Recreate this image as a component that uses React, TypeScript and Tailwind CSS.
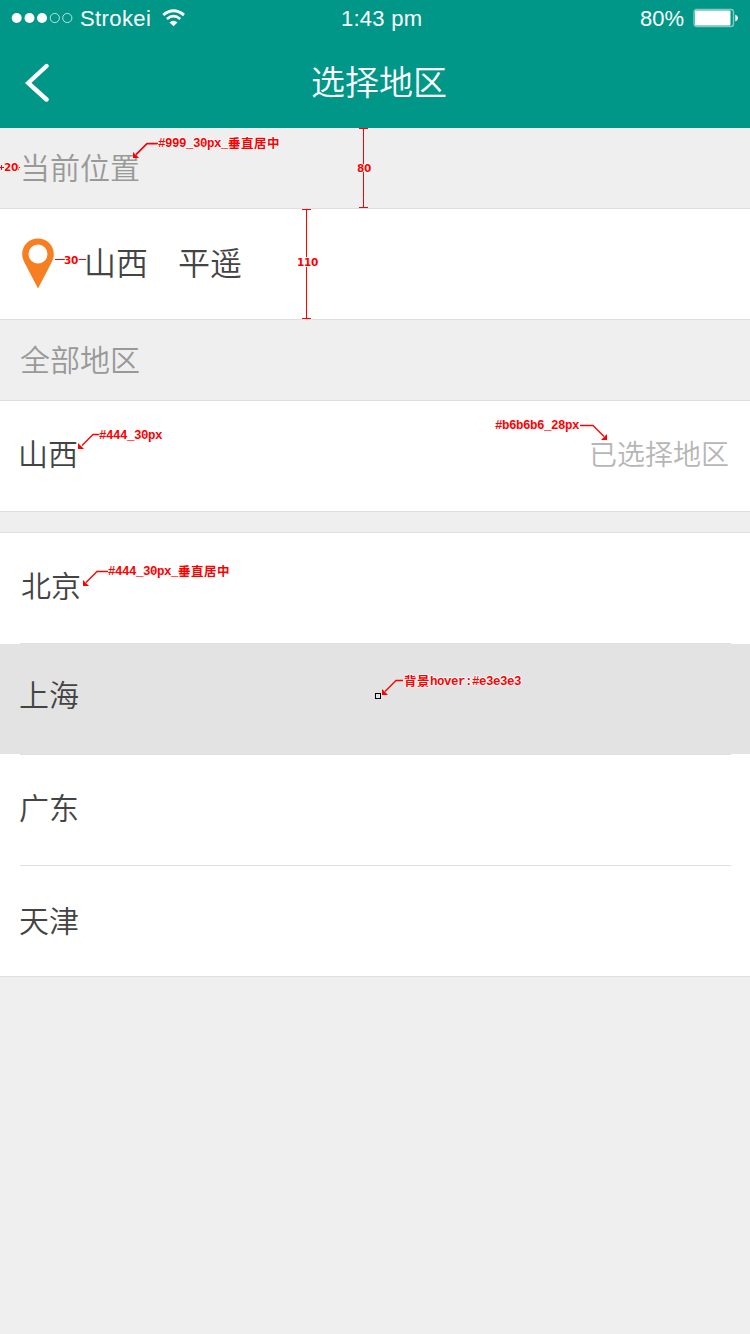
import type { ReactNode } from "react";

const cjk = "font-['Liberation_Sans','Noto_Sans_CJK_SC',sans-serif] font-[350]";

function StatusBar() {
  return (
    <div className="flex h-9 items-center pr-3 pl-[11px] text-[22px] leading-9 text-white">
      <div className="flex w-[330px] items-center">
        <svg width="62" height="12" viewBox="0 0 62 12" fill="#fff">
          <circle cx="5.7" cy="6" r="5" />
          <circle cx="18.5" cy="6" r="5" />
          <circle cx="31" cy="6" r="5" />
          <circle cx="43.8" cy="6" r="4.6" fill="none" stroke="#fff" strokeWidth="0.7" />
          <circle cx="56.3" cy="6" r="4.6" fill="none" stroke="#fff" strokeWidth="0.7" />
        </svg>
        <span className="ml-[7px] w-[71px] pt-px whitespace-nowrap tracking-[0.4px]">Strokei</span>
        <svg className="ml-[11px]" width="24" height="18" viewBox="0 0 24 18" fill="none" stroke="#fff">
          <path d="M1.200 6 Q11.500 -2.400 22 6" strokeWidth="2.900" />
          <path d="M4.900 10 Q11.500 4.300 18.200 10" strokeWidth="2.600" />
          <path d="M7.500 13.400 Q11.500 10 15.500 13.400 L11.500 17.200 Z" fill="#fff" stroke="none" />
        </svg>
      </div>
      <div className="w-[90px] pt-px whitespace-nowrap tracking-[0.25px]">1:43 pm</div>
      <div className="flex flex-1 items-center justify-end">
        <span className="pt-px whitespace-nowrap">80%</span>
        <svg className="ml-[9px]" width="45" height="20" viewBox="0 0 45 20">
          <rect x="1" y="1.500" width="39.500" height="17" rx="2.500" fill="none" stroke="#7fcac2" strokeWidth="1.400" />
          <rect x="2" y="2.500" width="35.500" height="15" rx="1" fill="#fff" />
          <path d="M42.300 6.500 Q45 7.500 45 10 Q45 12.500 42.300 13.500 Z" fill="#fff" />
        </svg>
      </div>
    </div>
  );
}

function SectionTitle({ children }: { children: ReactNode }) {
  return (
    <h2 className="flex h-[81px] items-center border-b border-[#dfdfdf] pt-px pl-5 text-[30px] font-[350] text-[#999]">
      {children}
    </h2>
  );
}

const halo = "[text-shadow:1px_0_#fff,-1px_0_#fff,0_1px_#fff,0_-1px_#fff]";

function Note({ className, children }: { className: string; children: ReactNode }) {
  return (
    <div
      className={
        "absolute flex h-4 items-center font-['Liberation_Mono','Noto_Sans_CJK_SC',monospace] text-[12.5px] leading-4 font-bold tracking-[-0.5px] whitespace-nowrap text-[#f00] " +
        halo +
        " " +
        className
      }
    >
      {children}
    </div>
  );
}

function Measure({ className, children }: { className: string; children: ReactNode }) {
  return (
    <div
      className={
        "absolute h-4 font-['DejaVu_Sans',sans-serif] text-[10.5px] leading-4 font-bold tracking-[-0.3px] whitespace-nowrap text-[#f00] " +
        halo +
        " " +
        className
      }
    >
      {children}
    </div>
  );
}

function Han({ children }: { children: ReactNode }) {
  return <span className="pt-px text-[12.5px] tracking-[0.5px]">{children}</span>;
}

function Annotations() {
  return (
    <div className="pointer-events-none absolute inset-0 overflow-hidden">
      <svg className="absolute inset-0" width="750" height="1334" fill="none" stroke="#f00" strokeWidth="1">
        <g shapeRendering="crispEdges">
          <path d="M359 128.500h9M363.500 128v80M359 207.500h9" />
          <path d="M302 209.500h9M306.500 209v110M302 318.500h9" />
          <path d="M0 167.500h4M1.500 165v5M18 167.500h2M18.500 165v5" />
          <path d="M55 259.500h10M77 259.500h9" />
        </g>
        <path d="M158 143.700h-11l-11 11" strokeWidth="1.700" />
        <path d="M100 434.500h-7l-11 11M580 425.500h13l11 11M108 571.500h-11l-11 11M403 680.500h-7l-11 11" strokeWidth="1.300" />
        <g fill="#f00" stroke="none">
          <path d="M133 152v6h6z" />
          <path d="M78 443v6h6z" />
          <path d="M607 434v6h-6z" />
          <path d="M83 580v6h6z" />
          <path d="M382 689v6h6z" />
        </g>
        <rect x="375.500" y="693.500" width="5" height="5" stroke="#000" fill="#e3e3e3" />
      </svg>
      <Note className="top-[136px] left-[158px]">#999_30px_<Han>垂直居中</Han></Note>
      <Measure className="top-[159px] left-[4px]">20</Measure>
      <Measure className="top-[160px] left-[357px]">80</Measure>
      <Measure className="top-[252px] left-[64px]">30</Measure>
      <Measure className="top-[254px] left-[297px]">110</Measure>
      <Note className="top-[428px] left-[99px]">#444_30px</Note>
      <Note className="top-[418px] left-[495px]">#b6b6b6_28px</Note>
      <Note className="top-[564px] left-[108px]">#444_30px_<Han>垂直居中</Han></Note>
      <Note className="top-[674px] left-[404px]"><Han>背景</Han>hover:#e3e3e3</Note>
    </div>
  );
}

export default function App() {
  return (
    <div className={"relative flex h-[1334px] w-[750px] flex-col overflow-hidden bg-[#efefef] text-[#444] " + cjk}>
      <header className="h-32 bg-[#009788]">
        <StatusBar />
        <div className="grid h-[92px] grid-cols-[100px_1fr_100px] items-center">
          <svg className="mb-[3px] ml-[25px]" width="26" height="40" viewBox="0 0 26 40" fill="none" stroke="#fff" strokeWidth="4.400" strokeLinecap="round">
            <path d="M21.500 4 L3.200 21 L21.500 37.500" />
          </svg>
          <h1 className="pl-2 text-center text-[34px] leading-[94px] font-[350] text-white">选择地区</h1>
        </div>
      </header>

      <SectionTitle>当前位置</SectionTitle>
      <section className="flex h-[111px] items-center border-b border-[#dfdfdf] bg-white pb-px pl-[22px] text-[32px]">
        <svg width="32" height="51" viewBox="0 0 32 51">
          <path
            d="M16 0.500C7.100 0.500 0.200 7.300 0.200 16C0.200 19 1 21.500 2.200 24L16 50.500L29.800 24C31 21.500 31.800 19 31.800 16C31.800 7.300 24.900 0.500 16 0.500ZM16 6.500A9.500 9.500 0 1 1 16 25.500A9.500 9.500 0 1 1 16 6.500Z"
            fill="#f77f21"
            fillRule="evenodd"
          />
        </svg>
        <span className="ml-[30px] pt-px">山西</span>
        <span className="ml-[30px] pt-px">平遥</span>
      </section>

      <SectionTitle>全部地区</SectionTitle>
      <section className="flex h-[111px] items-center justify-between border-b border-[#dfdfdf] bg-white pr-[21px] pl-[18px] pb-1">
        <span className="text-[30px]">山西</span>
        <span className="pt-[3px] text-[28px] text-[#b6b6b6]">已选择地区</span>
      </section>

      <ul className="mt-5 border-y border-[#dfdfdf] bg-white text-[30px]">
        <li className="flex h-[110px] items-center pb-[3px] pl-[21px]">北京</li>
        <li className="mr-[19px] ml-5 h-px bg-[#dfdfdf]" />
        <li className="flex h-[110px] items-center bg-[#e3e3e3] pb-2 pl-[19px]">上海</li>
        <li className="mr-[19px] ml-5 h-px bg-[#dfdfdf]" />
        <li className="flex h-[110px] items-center pb-1 pl-[19px]">广东</li>
        <li className="mr-[19px] ml-5 h-px bg-[#dfdfdf]" />
        <li className="flex h-[110px] items-center pl-[19px]">天津</li>
      </ul>

      <Annotations />
    </div>
  );
}
